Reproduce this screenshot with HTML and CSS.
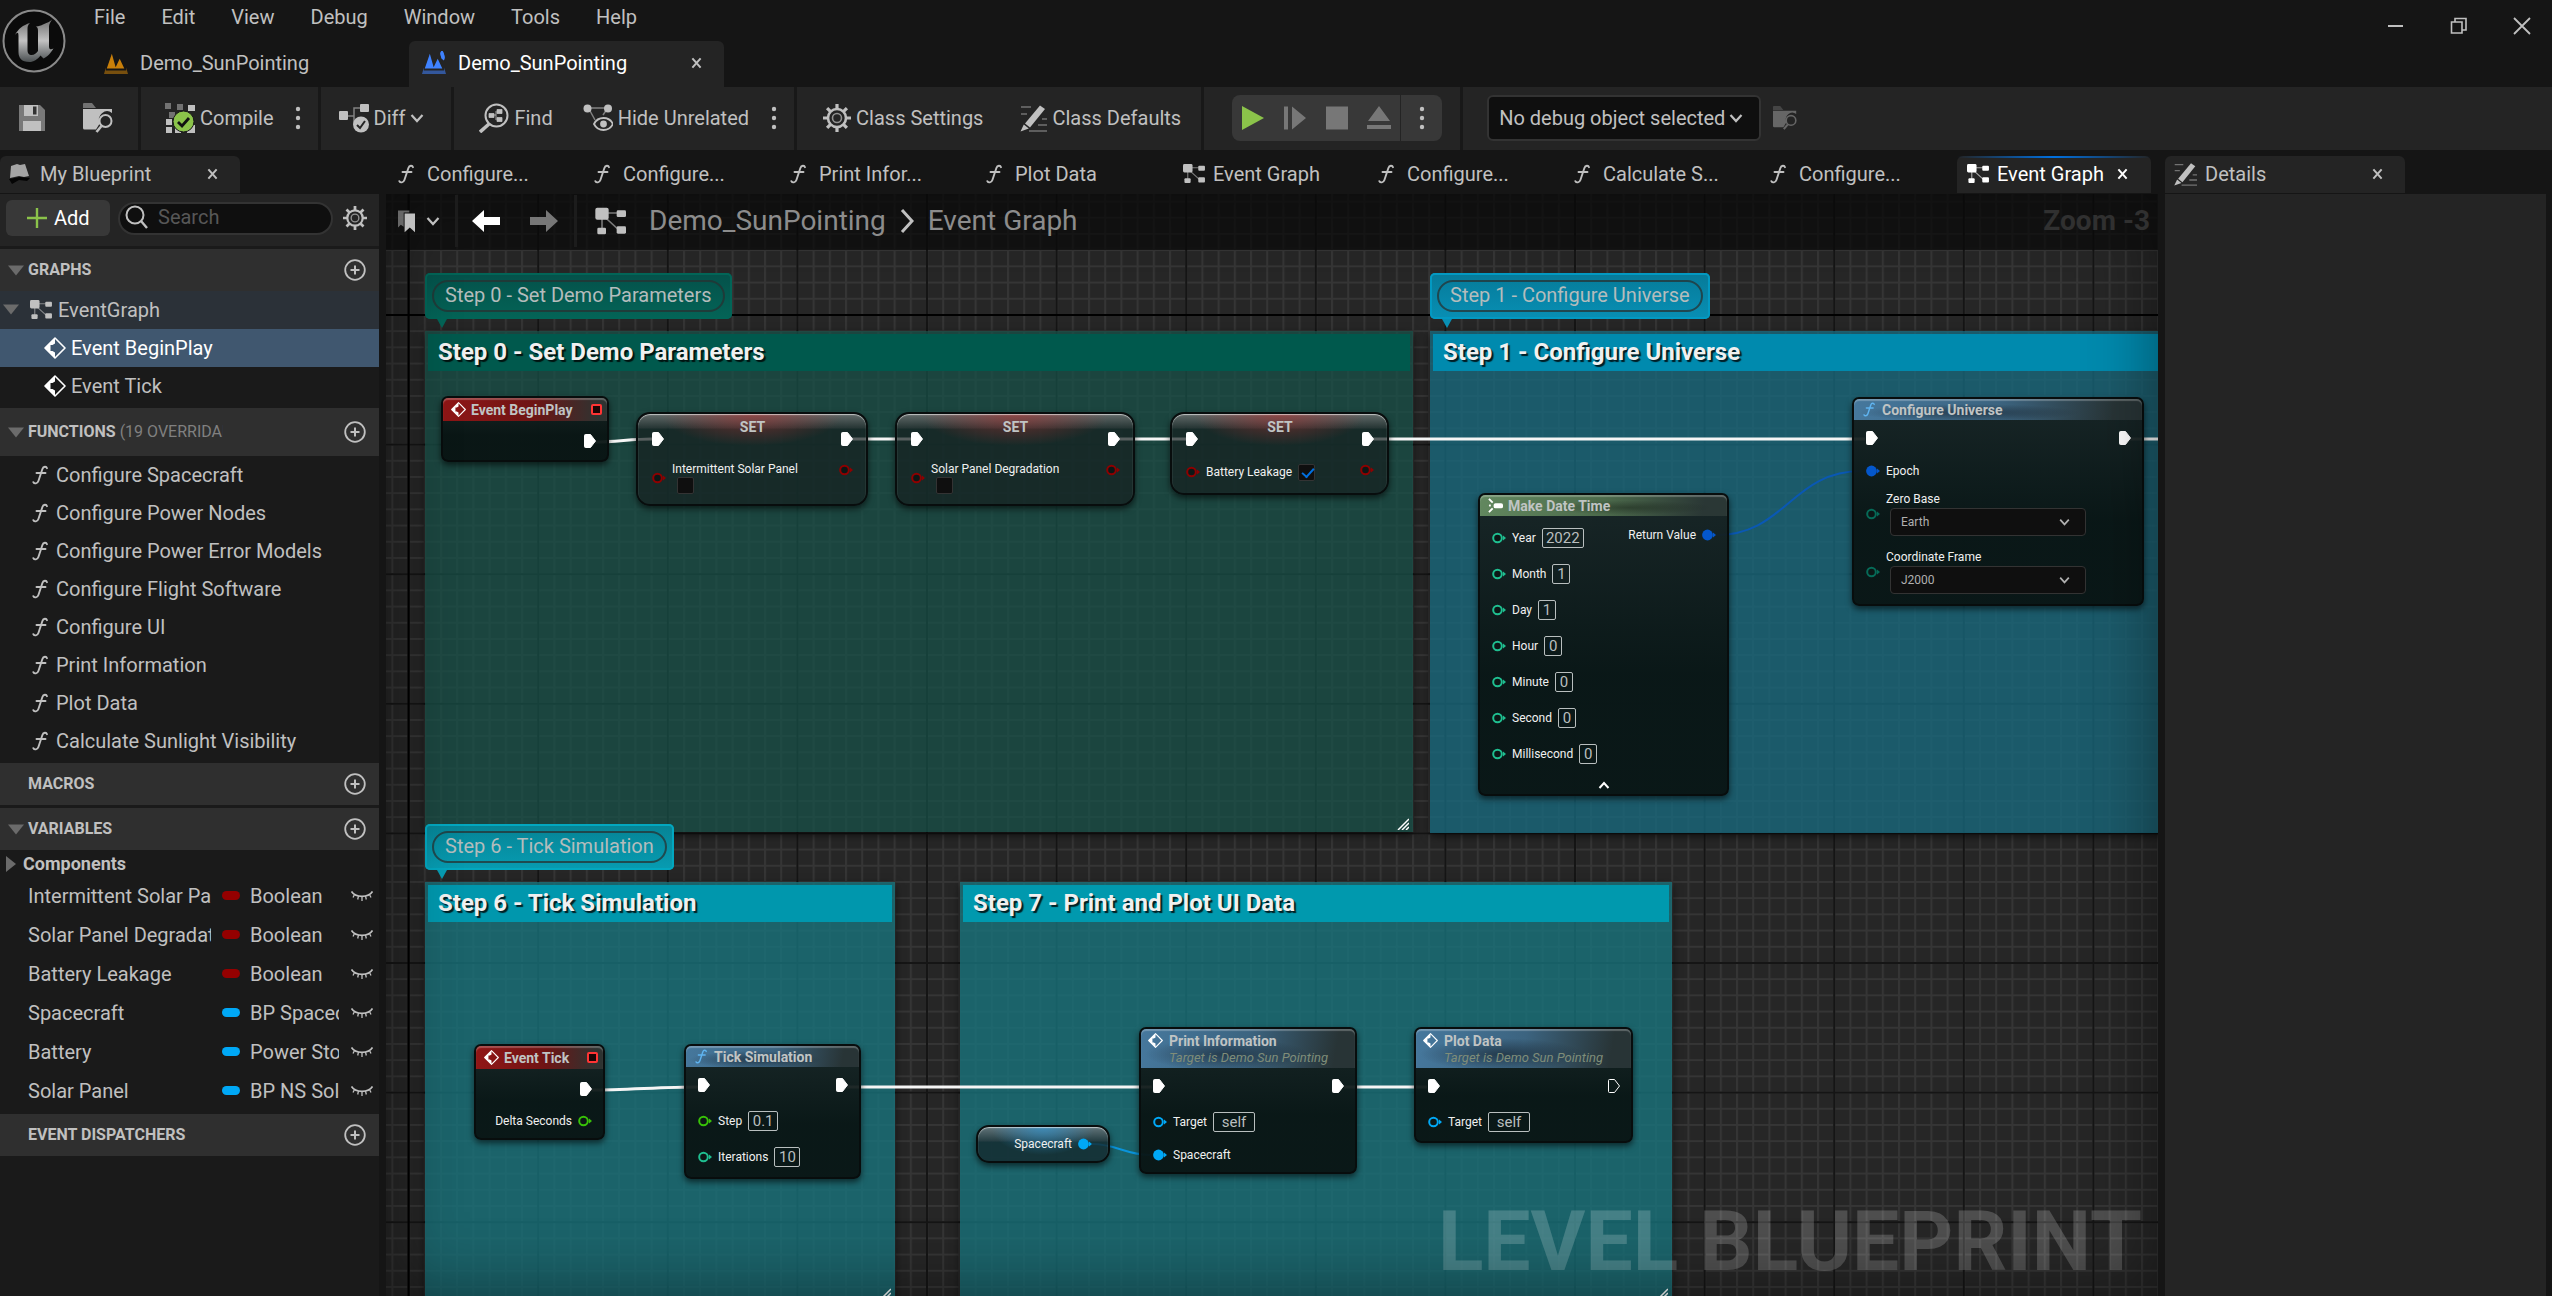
FILE: index.html
```html
<!DOCTYPE html>
<html lang="en">
<head>
    <meta charset="UTF-8">
    <meta name="viewport" content="width=device-width, initial-scale=1.0">
    <title>Demo_SunPointing</title>
    <link rel="stylesheet" href="styles.css">
</head>
<body>
    <!-- Shared icons -->
    <svg class="sprite" aria-hidden="true">
        <symbol id="i-func" viewBox="0 0 16 20"><path d="M15 3.2c-.6-2-3.6-2.2-4.6.8L6.4 16c-1 2.8-4 3-5 1.2M4.5 8h9" fill="none" stroke="currentColor" stroke-width="1.9" stroke-linecap="round"/></symbol>
        <symbol id="i-graph" viewBox="0 0 24 22"><path d="M8 5h12M6 8v12M8 8l11 10" stroke="currentColor" stroke-width="1.2" opacity=".6" fill="none"/><g fill="currentColor"><rect x="1" y="1" width="10" height="9" rx="1.5"/><rect x="17" y="3" width="7" height="5" rx="1"/><rect x="2.500" y="16" width="6.500" height="5" rx="1"/><rect x="17" y="15" width="7" height="5.500" rx="1"/></g></symbol>
        <symbol id="i-event" viewBox="0 0 22 22"><path d="M11 1 21 11 11 21 1 11z" fill="none" stroke="currentColor" stroke-width="1.6" stroke-linejoin="round"/><path d="M11 1v5.500L8.500 8H6.500v6h2L11 15.500V21L1 11z" fill="currentColor"/></symbol>
        <symbol id="i-exec" viewBox="0 0 12 14"><path d="M1.500.5h5L11.500 7l-5 6.500h-5a1 1 0 0 1-1-1v-11a1 1 0 0 1 1-1z"/></symbol>
        <symbol id="i-pin" viewBox="0 0 14 12"><circle cx="5.500" cy="6" r="4.300" fill="#0c1716" stroke="currentColor" stroke-width="2"/><path d="M11 3.500 14 6l-3 2.500z" fill="currentColor"/></symbol>
        <symbol id="i-pin-on" viewBox="0 0 14 12"><circle cx="5.500" cy="6" r="5.400" fill="currentColor"/><path d="M11 3.500 14 6l-3 2.500z" fill="currentColor"/></symbol>
        <symbol id="i-plus" viewBox="0 0 22 22"><circle cx="11" cy="11" r="9.800" fill="none" stroke="currentColor" stroke-width="1.800"/><path d="M11 6.500v9M6.500 11h9" stroke="currentColor" stroke-width="2"/></symbol>
        <symbol id="i-chev" viewBox="0 0 14 10"><path d="m1.500 2 5.500 6 5.500-6" fill="none" stroke="currentColor" stroke-width="2.200"/></symbol>
        <symbol id="i-dots" viewBox="0 0 6 24"><g fill="currentColor"><circle cx="3" cy="3" r="2.200"/><circle cx="3" cy="12" r="2.200"/><circle cx="3" cy="21" r="2.200"/></g></symbol>
        <symbol id="i-close" viewBox="0 0 12 12"><path d="m1.500 1 9 10m0-10-9 10" stroke="currentColor" stroke-width="2.200"/></symbol>
        <symbol id="i-gear" viewBox="0 0 28 28"><circle cx="14" cy="14" r="9" fill="none" stroke="currentColor" stroke-width="2.600"/><circle cx="14" cy="14" r="4.500" fill="none" stroke="currentColor" stroke-width="1.600" opacity=".7"/><path d="M14 0v5M14 23v5M0 14h5M23 14h5M4.100 4.100l3.500 3.500M20.400 20.400l3.500 3.500M4.100 23.900l3.500-3.500M20.400 7.600l3.500-3.500" stroke="currentColor" stroke-width="3.200"/></symbol>
        <symbol id="i-pencil" viewBox="0 0 28 28"><path d="M2 3h10M2 10h6M23 15h5M19 21h9M10 27h18" stroke="currentColor" stroke-width="1.600" opacity=".5"/><path d="M21 1.500 26 5 11 23.500 6 19.500z" fill="currentColor"/><path d="m4.800 20.500 5 4L1.500 27.500z" fill="currentColor"/></symbol>
        <symbol id="i-eye" viewBox="0 0 22 12"><path d="M.5 1.500c4 6.500 17 6.500 21 0" fill="none" stroke="currentColor" stroke-width="1.700"/><path d="M3.500 4.500 2 7.500M7.500 6l-.8 3.500M11 6.500V11M14.500 6l.8 3.500M18.500 4.500l1.500 3" stroke="currentColor" stroke-width="1.300"/></symbol>
        <symbol id="i-tri" viewBox="0 0 16 11"><path d="M0 .5h16L8 10.500z" fill="currentColor"/></symbol>
        <symbol id="i-browse" viewBox="0 0 30 30"><path d="M0 5V1q0-1 1-1h8l4 5z" fill="currentColor" opacity=".5"/><path d="M0 6h29v4a8 8 0 0 0-12 10l-4 6.500H1.500q-1.500 0-1.500-1.500z" fill="currentColor"/><circle cx="22.500" cy="18" r="6" fill="none" stroke="currentColor" stroke-width="2"/><path d="m18.500 23-5 6" stroke="currentColor" stroke-width="2.600"/></symbol>
        <symbol id="i-grip" viewBox="0 0 12 12"><path d="M1 12 12 1M5 12l7-7M9 12l3-3" stroke="currentColor" stroke-width="1.500"/></symbol>
        <symbol id="i-level" viewBox="0 0 26 26"><path d="M3 19 8.500 3l4.500 16zM12 19l5-10.500L22 19z" fill="currentColor"/><path d="M2 18 0 25h26l-2-7v3H2z" fill="currentColor" opacity=".55"/></symbol>
    </svg>

    <header class="titlebar">
        <svg class="logo" viewBox="0 0 66 66" role="img" aria-label="Unreal Engine">
            <defs><linearGradient id="metal" x1="0" y1="0" x2="0" y2="1"><stop offset="0" stop-color="#6f6f6f"/><stop offset=".5" stop-color="#c2c2c2"/><stop offset="1" stop-color="#4b5052"/></linearGradient></defs>
            <circle cx="33" cy="33" r="30.500" fill="#0b0b0b" stroke="#8a8a8a" stroke-width="2"/>
            <path d="M14 27c3-6 8-10 15-12-2 2-2.500 3-2.500 6v21c0 4 2 5 4 5 3 0 5-2 6.500-4V23c0-3-.5-3.500-2-4.500 3-.3 5-1 7-2 4-1.500 7-3 9-5-1.500 3-3 4-3 8v19c0 3 2 3.500 4.500 2-2.500 4-6 8.500-10 10l-3-3c-3 4-7 6.500-11 6.500-8 0-11-4-11-10V28c0-4-1-4.500-3.500-1z" fill="url(#metal)"/>
        </svg>
        <div class="title-main">
            <nav class="menu">
                <a href="#">File</a><a href="#">Edit</a><a href="#">View</a><a href="#">Debug</a><a href="#">Window</a><a href="#">Tools</a><a href="#">Help</a>
            </nav>
            <div class="doc-tabs">
                <a class="doc-tab" href="#"><svg class="level-icon orange"><use href="#i-level"/></svg>Demo_SunPointing</a>
                <a class="doc-tab active" href="#"><svg class="level-icon blue" viewBox="0 0 26 26"><use href="#i-level"/><path d="M23 1c-4 2 2 5-1 8" fill="none" stroke="currentColor" stroke-width="4"/></svg>Demo_SunPointing<svg class="close"><use href="#i-close"/></svg></a>
            </div>
        </div>
        <div class="window-controls">
            <button aria-label="Minimize"><svg viewBox="0 0 18 18"><path d="M1 9h15" stroke="currentColor" stroke-width="2"/></svg></button>
            <button aria-label="Restore"><svg viewBox="0 0 18 18"><path d="M1.500 5h10.500v11H1.500zM5 5V1.500h11V13h-4" fill="none" stroke="currentColor" stroke-width="1.600"/></svg></button>
            <button aria-label="Close"><svg viewBox="0 0 18 18"><path d="m1 1 16 16M17 1 1 17" stroke="currentColor" stroke-width="1.800"/></svg></button>
        </div>
    </header>

    <div class="toolbar">
        <div class="tool-group g-file">
            <button aria-label="Save"><svg class="icon-28" viewBox="0 0 28 28"><path d="M1 1h21l5 5v21H1z" fill="currentColor" opacity=".55"/><path d="M6 1h14v11H6zM5 17h18v10H5z" fill="currentColor"/><path d="M15 2.500h3.500v8H15z" fill="#333"/></svg></button>
            <button aria-label="Browse"><svg class="icon-30"><use href="#i-browse"/></svg></button>
        </div>
        <div class="tool-group g-compile">
            <button><svg class="icon-30" viewBox="0 0 30 30"><g fill="currentColor"><path opacity=".5" d="M0 0h6v6H0zM12 1h6v6h-6zM4 9h6v6H4z"/><path d="M23 2h7v6h-7zM1 16h6v6H1zM1 24h6v6H1zM22 22h8v8h-8zM10 24h6v6h-6z"/></g><circle cx="18.500" cy="18.500" r="10.500" fill="#8bc34a" stroke="#1a1a1a"/><path d="m13 19 4 4 7-8" fill="none" stroke="#111" stroke-width="2.800"/></svg>Compile</button>
            <button aria-label="Compile options"><svg class="dots"><use href="#i-dots"/></svg></button>
        </div>
        <div class="tool-group g-diff">
            <button><svg class="icon-30" viewBox="0 0 30 30"><path d="M9 13h6V5h6M15 13v8" fill="none" stroke="currentColor" stroke-width="1.500" opacity=".6"/><rect y="8" width="9" height="9" rx="1" fill="currentColor"/><rect x="21" y="1" width="9" height="8" rx="1" fill="currentColor"/><circle cx="22" cy="21.500" r="8" fill="currentColor"/><path d="m18 22 3 3 5-7" fill="none" stroke="#242424" stroke-width="2"/></svg>Diff<svg class="chev"><use href="#i-chev"/></svg></button>
        </div>
        <div class="tool-group g-find">
            <button><svg class="icon-30" viewBox="0 0 30 30"><circle cx="17.500" cy="12.500" r="11" fill="none" stroke="currentColor" stroke-width="2"/><path d="m10 21-9 8" stroke="currentColor" stroke-width="3.600"/><path d="M10 10.500h5v4h-5zM18 6.500h5v4h-5zM18 14.500h5v4h-5zM15 12h2M17 8v9" fill="currentColor" stroke="currentColor" stroke-width=".8"/></svg>Find</button>
            <button><svg class="icon-30" viewBox="0 0 30 30"><path d="M5 5h20M6 6l6 11M24 6l-4 6" stroke="currentColor" stroke-width="1.500" opacity=".6"/><circle cx="4.500" cy="5.500" r="4" fill="currentColor"/><circle cx="25" cy="5.500" r="4" fill="currentColor"/><path d="M11 21c4-8 15-8 19 0-4 8-15 8-19 0z" fill="none" stroke="currentColor" stroke-width="1.800"/><circle cx="20.500" cy="21" r="3.400" fill="currentColor"/></svg>Hide Unrelated</button>
            <button aria-label="Hide options"><svg class="dots"><use href="#i-dots"/></svg></button>
        </div>
        <div class="tool-group g-class">
            <button><svg class="icon-28"><use href="#i-gear"/></svg>Class Settings</button>
            <button><svg class="icon-28"><use href="#i-pencil"/></svg>Class Defaults</button>
        </div>
        <div class="tool-group g-play">
            <div class="play-box">
                <button class="play" aria-label="Play"><svg viewBox="0 0 24 26"><path d="M1 1v24l22-12z" fill="currentColor"/></svg></button>
                <button aria-label="Step"><svg viewBox="0 0 24 26"><path d="M1 1.500h4v23H1zM9 1.500v23L23 13z" fill="currentColor"/></svg></button>
                <button aria-label="Stop"><svg viewBox="0 0 24 26"><path d="M1 1.500h22v23H1z" fill="currentColor"/></svg></button>
                <button aria-label="Eject"><svg viewBox="0 0 24 26"><path d="M12 1 23 16H1zM0 20h24v4H0z" fill="currentColor"/></svg></button>
                <button class="more" aria-label="Play options"><svg class="dots"><use href="#i-dots"/></svg></button>
            </div>
        </div>
        <div class="tool-group g-debug">
            <div class="select-wrap debug-select">
                <select aria-label="Debug object"><option>No debug object selected</option></select>
                <svg class="chev"><use href="#i-chev"/></svg>
            </div>
            <button class="dim" aria-label="Browse debug object"><svg class="icon-24"><use href="#i-browse"/></svg></button>
        </div>
    </div>

    <main class="workspace">
        <aside class="panel my-blueprint">
            <div class="panel-tabs">
                <div class="panel-tab"><svg class="icon-24" viewBox="0 0 24 24"><path d="M3 4 9 2l3 1 5-1 4 12-5 1-5-1-9 2z" fill="#a5a5a5"/><path d="m1 17 11-2 10 1-3 3-8-1-7 4z" fill="#050505"/></svg><span>My Blueprint</span><svg class="close"><use href="#i-close"/></svg></div>
            </div>
            <div class="add-row">
                <button class="add-button"><svg class="add-plus" viewBox="0 0 20 20"><path d="M10 0v20M0 10h20" stroke="currentColor" stroke-width="2.400"/></svg>Add</button>
                <label class="search"><svg class="icon-24" viewBox="0 0 24 24"><circle cx="11" cy="10" r="8.500" fill="none" stroke="currentColor" stroke-width="2"/><path d="m17 16 6 7" stroke="currentColor" stroke-width="2.400"/></svg><input type="text" placeholder="Search" aria-label="Search"></label>
                <button aria-label="View settings"><svg class="gear"><use href="#i-gear"/></svg></button>
            </div>
            <section>
                <h2><svg class="tri"><use href="#i-tri"/></svg>GRAPHS<button aria-label="Add graph"><svg><use href="#i-plus"/></svg></button></h2>
                <ul class="tree">
                    <li class="parent"><svg class="tri"><use href="#i-tri"/></svg><svg class="graph-icon"><use href="#i-graph"/></svg>EventGraph</li>
                    <li class="child selected"><svg class="event-icon"><use href="#i-event"/></svg>Event BeginPlay</li>
                    <li class="child"><svg class="event-icon"><use href="#i-event"/></svg>Event Tick</li>
                </ul>
            </section>
            <section>
                <h2 class="tall"><svg class="tri"><use href="#i-tri"/></svg>FUNCTIONS<span class="override">(19 OVERRIDABLE)</span><button aria-label="Add function"><svg><use href="#i-plus"/></svg></button></h2>
                <ul class="tree functions">
                    <li><svg class="func-icon"><use href="#i-func"/></svg>Configure Spacecraft</li>
                    <li><svg class="func-icon"><use href="#i-func"/></svg>Configure Power Nodes</li>
                    <li><svg class="func-icon"><use href="#i-func"/></svg>Configure Power Error Models</li>
                    <li><svg class="func-icon"><use href="#i-func"/></svg>Configure Flight Software</li>
                    <li><svg class="func-icon"><use href="#i-func"/></svg>Configure UI</li>
                    <li><svg class="func-icon"><use href="#i-func"/></svg>Print Information</li>
                    <li><svg class="func-icon"><use href="#i-func"/></svg>Plot Data</li>
                    <li><svg class="func-icon"><use href="#i-func"/></svg>Calculate Sunlight Visibility</li>
                </ul>
            </section>
            <section>
                <h2><i class="tri"></i>MACROS<button aria-label="Add macro"><svg><use href="#i-plus"/></svg></button></h2>
            </section>
            <section>
                <h2><svg class="tri"><use href="#i-tri"/></svg>VARIABLES<button aria-label="Add variable"><svg><use href="#i-plus"/></svg></button></h2>
                <h3><svg viewBox="0 0 10 16"><path d="M0 0v16l10-8z" fill="#6b6b6b"/></svg>Components</h3>
                <ul class="variables">
                    <li><span class="name">Intermittent Solar Panel</span><i class="pill bool"></i><span class="type">Boolean</span><svg><use href="#i-eye"/></svg></li>
                    <li><span class="name">Solar Panel Degradation</span><i class="pill bool"></i><span class="type">Boolean</span><svg><use href="#i-eye"/></svg></li>
                    <li><span class="name">Battery Leakage</span><i class="pill bool"></i><span class="type">Boolean</span><svg><use href="#i-eye"/></svg></li>
                    <li><span class="name">Spacecraft</span><i class="pill object"></i><span class="type">BP Spacecraft</span><svg><use href="#i-eye"/></svg></li>
                    <li><span class="name">Battery</span><i class="pill object"></i><span class="type">Power Storage</span><svg><use href="#i-eye"/></svg></li>
                    <li><span class="name">Solar Panel</span><i class="pill object"></i><span class="type">BP NS Solar</span><svg><use href="#i-eye"/></svg></li>
                </ul>
            </section>
            <section>
                <h2><i class="tri"></i>EVENT DISPATCHERS<button aria-label="Add dispatcher"><svg><use href="#i-plus"/></svg></button></h2>
            </section>
        </aside>

        <section class="panel graph-panel">
            <div class="graph-tabs">
                <a class="graph-tab" href="#"><svg class="func-icon"><use href="#i-func"/></svg>Configure...</a>
                <a class="graph-tab" href="#"><svg class="func-icon"><use href="#i-func"/></svg>Configure...</a>
                <a class="graph-tab" href="#"><svg class="func-icon"><use href="#i-func"/></svg>Print Infor...</a>
                <a class="graph-tab" href="#"><svg class="func-icon"><use href="#i-func"/></svg>Plot Data</a>
                <a class="graph-tab" href="#"><svg class="graph-icon"><use href="#i-graph"/></svg>Event Graph</a>
                <a class="graph-tab" href="#"><svg class="func-icon"><use href="#i-func"/></svg>Configure...</a>
                <a class="graph-tab" href="#"><svg class="func-icon"><use href="#i-func"/></svg>Calculate S...</a>
                <a class="graph-tab" href="#"><svg class="func-icon"><use href="#i-func"/></svg>Configure...</a>
                <a class="graph-tab active" href="#"><svg class="graph-icon"><use href="#i-graph"/></svg>Event Graph<svg class="close"><use href="#i-close"/></svg></a>
            </div>

            <div class="canvas">
                <svg class="grid">
                    <defs>
                        <pattern id="grid-minor" x="21.600" y="120" width="16.200" height="16.200" patternUnits="userSpaceOnUse"><path d="M1 0v17M0 1h17" stroke="#353535" stroke-width="2"/></pattern>
                        <pattern id="grid-major" x="21.600" y="120" width="129.600" height="129.600" patternUnits="userSpaceOnUse"><path d="M1 0v130M0 1h130" stroke="#151515" stroke-width="2"/></pattern>
                    </defs>
                    <rect width="100%" height="100%" fill="url(#grid-minor)"/>
                    <rect width="100%" height="100%" fill="url(#grid-major)"/>
                    <path d="M22.600 0v2000M0 121h4000" stroke="#000" stroke-width="2"/>
                </svg>

                <div class="comment" id="comment-0"><h4>Step 0 - Set Demo Parameters</h4><svg class="grip"><use href="#i-grip"/></svg></div>
                <div class="comment" id="comment-1"><h4>Step 1 - Configure Universe</h4></div>
                <div class="comment" id="comment-6"><h4>Step 6 - Tick Simulation</h4><svg class="grip"><use href="#i-grip"/></svg></div>
                <div class="comment" id="comment-7"><h4>Step 7 - Print and Plot UI Data</h4><svg class="grip"><use href="#i-grip"/></svg></div>
                <div class="bubble" id="bubble-0"><span>Step 0 - Set Demo Parameters</span></div>
                <div class="bubble" id="bubble-1"><span>Step 1 - Configure Universe</span></div>
                <div class="bubble" id="bubble-6"><span>Step 6 - Tick Simulation</span></div>

                <svg class="wires" fill="none">
                    <g stroke="#f5f5f5" stroke-width="3">
                        <path d="M209 248C230 248 245 245 266 245M465 245h60M733 245h68M987 245h492M1744 245h900"/>
                        <path d="M204 896C240 896 276 893 312 893M461 893h305M958 893h83"/>
                    </g>
                    <path d="M1330 341C1400 341 1405 277 1476 277" stroke="#0a58b4" stroke-width="2"/>
                    <path d="M706 950C730 950 740 961 764 961" stroke="#0a94dc" stroke-width="2"/>
                </svg>

                <article class="node event" id="begin-play">
                    <header><svg class="event-icon"><use href="#i-event"/></svg>Event BeginPlay<i class="delegate"></i></header>
                    <div class="row exec"><i></i><svg class="pin-exec"><use href="#i-exec"/></svg></div>
                </article>

                <article class="node setter" id="set-intermittent">
                    <div class="set-head"><svg class="pin-exec"><use href="#i-exec"/></svg><b>SET</b><svg class="pin-exec"><use href="#i-exec"/></svg></div>
                    <div class="set-row"><svg class="pin bool"><use href="#i-pin"/></svg><label class="stacked">Intermittent Solar Panel<input type="checkbox"></label><svg class="pin bool out"><use href="#i-pin"/></svg></div>
                </article>
                <article class="node setter" id="set-degradation">
                    <div class="set-head"><svg class="pin-exec"><use href="#i-exec"/></svg><b>SET</b><svg class="pin-exec"><use href="#i-exec"/></svg></div>
                    <div class="set-row"><svg class="pin bool"><use href="#i-pin"/></svg><label class="stacked">Solar Panel Degradation<input type="checkbox"></label><svg class="pin bool out"><use href="#i-pin"/></svg></div>
                </article>
                <article class="node setter" id="set-leakage">
                    <div class="set-head"><svg class="pin-exec"><use href="#i-exec"/></svg><b>SET</b><svg class="pin-exec"><use href="#i-exec"/></svg></div>
                    <div class="set-row"><svg class="pin bool"><use href="#i-pin"/></svg><label>Battery Leakage<input type="checkbox" checked></label><svg class="pin bool out"><use href="#i-pin"/></svg></div>
                </article>

                <article class="node pure" id="make-date">
                    <header><svg class="make-icon" viewBox="0 0 16 16"><path d="m1 1 4 4M1 15l4-4" stroke="currentColor" stroke-width="2"/><rect x="6" y="5.500" width="10" height="5.500" rx="2" fill="currentColor"/><path d="M1 8h2" stroke="currentColor" stroke-width="2"/></svg>Make Date Time</header>
                    <div class="columns">
                        <div>
                            <label class="row"><svg class="pin int"><use href="#i-pin"/></svg>Year<input type="text" class="w-4" value="2022"></label>
                            <label class="row"><svg class="pin int"><use href="#i-pin"/></svg>Month<input type="text" class="w-1" value="1"></label>
                            <label class="row"><svg class="pin int"><use href="#i-pin"/></svg>Day<input type="text" class="w-1" value="1"></label>
                            <label class="row"><svg class="pin int"><use href="#i-pin"/></svg>Hour<input type="text" class="w-1" value="0"></label>
                            <label class="row"><svg class="pin int"><use href="#i-pin"/></svg>Minute<input type="text" class="w-1" value="0"></label>
                            <label class="row"><svg class="pin int"><use href="#i-pin"/></svg>Second<input type="text" class="w-1" value="0"></label>
                            <label class="row"><svg class="pin int"><use href="#i-pin"/></svg>Millisecond<input type="text" class="w-1" value="0"></label>
                        </div>
                        <div class="row short">Return Value<svg class="pin struct"><use href="#i-pin-on"/></svg></div>
                    </div>
                    <button class="collapse" aria-label="Collapse"><svg viewBox="0 0 12 8"><path d="m1.500 7 4.500-5 4.500 5" fill="none" stroke="currentColor" stroke-width="2"/></svg></button>
                </article>

                <article class="node func" id="configure-universe">
                    <header><svg class="func-icon"><use href="#i-func"/></svg>Configure Universe</header>
                    <div class="row exec"><svg class="pin-exec"><use href="#i-exec"/></svg><svg class="pin-exec"><use href="#i-exec"/></svg></div>
                    <div class="row short"><svg class="pin struct"><use href="#i-pin-on"/></svg>Epoch</div>
                    <div class="row picker"><svg class="pin enum"><use href="#i-pin"/></svg><div><label for="zero-base">Zero Base</label><div class="select-wrap"><select id="zero-base"><option>Earth</option></select><svg class="chev"><use href="#i-chev"/></svg></div></div></div>
                    <div class="row picker"><svg class="pin enum"><use href="#i-pin"/></svg><div><label for="frame">Coordinate Frame</label><div class="select-wrap"><select id="frame"><option>J2000</option></select><svg class="chev"><use href="#i-chev"/></svg></div></div></div>
                </article>

                <article class="node event" id="event-tick">
                    <header><svg class="event-icon"><use href="#i-event"/></svg>Event Tick<i class="delegate"></i></header>
                    <div class="row exec"><i></i><svg class="pin-exec"><use href="#i-exec"/></svg></div>
                    <div class="row short right">Delta Seconds<svg class="pin float"><use href="#i-pin"/></svg></div>
                </article>

                <article class="node func" id="tick-simulation">
                    <header><svg class="func-icon"><use href="#i-func"/></svg>Tick Simulation</header>
                    <div class="row exec"><svg class="pin-exec"><use href="#i-exec"/></svg><svg class="pin-exec"><use href="#i-exec"/></svg></div>
                    <label class="row"><svg class="pin float"><use href="#i-pin"/></svg>Step<input type="text" class="w-3" value="0.1"></label>
                    <label class="row"><svg class="pin int"><use href="#i-pin"/></svg>Iterations<input type="text" class="w-2" value="10"></label>
                </article>

                <article class="node getter" id="get-spacecraft">Spacecraft<svg class="pin object"><use href="#i-pin-on"/></svg></article>

                <article class="node func call" id="print-information">
                    <header><svg class="event-icon"><use href="#i-event"/></svg><div>Print Information<em>Target is Demo Sun Pointing</em></div></header>
                    <div class="row exec"><svg class="pin-exec"><use href="#i-exec"/></svg><svg class="pin-exec"><use href="#i-exec"/></svg></div>
                    <label class="row"><svg class="pin object"><use href="#i-pin"/></svg>Target<input type="text" class="w-4" value="self"></label>
                    <div class="row short"><svg class="pin object"><use href="#i-pin-on"/></svg>Spacecraft</div>
                </article>

                <article class="node func call" id="plot-data">
                    <header><svg class="event-icon"><use href="#i-event"/></svg><div>Plot Data<em>Target is Demo Sun Pointing</em></div></header>
                    <div class="row exec"><svg class="pin-exec"><use href="#i-exec"/></svg><svg class="pin-exec hollow"><use href="#i-exec"/></svg></div>
                    <label class="row"><svg class="pin object"><use href="#i-pin"/></svg>Target<input type="text" class="w-4" value="self"></label>
                </article>

                <div class="watermark">LEVEL BLUEPRINT</div>
                <div class="vignette"></div>

                <div class="graph-bar">
                    <button class="bookmark" aria-label="Bookmarks"><svg class="mark" viewBox="0 0 18 24"><path d="M0 1h12v2H6v15l-3-2-3 3z" fill="currentColor" opacity=".5"/><path d="M7 4h11v20l-5.500-5L7 24z" fill="currentColor"/></svg><svg class="chev"><use href="#i-chev"/></svg></button>
                    <button class="nav back" aria-label="Back"><svg viewBox="0 0 28 22"><path d="M0 11 12 0v7h16v8H12v7z" fill="currentColor"/></svg></button>
                    <button class="nav forward" aria-label="Forward"><svg viewBox="0 0 28 22"><path d="M28 11 16 0v7H0v8h16v7z" fill="currentColor"/></svg></button>
                    <svg class="crumb-icon"><use href="#i-graph"/></svg>
                    <a href="#">Demo_SunPointing</a>
                    <svg class="crumb-sep" viewBox="0 0 14 24"><path d="m2 1 10 11L2 23" fill="none" stroke="currentColor" stroke-width="3"/></svg>
                    <a href="#">Event Graph</a>
                    <strong>Zoom -3</strong>
                </div>
            </div>
        </section>

        <aside class="panel details">
            <div class="panel-tabs">
                <div class="panel-tab"><svg class="icon-24"><use href="#i-pencil"/></svg><span>Details</span><svg class="close"><use href="#i-close"/></svg></div>
            </div>
            <div class="details-body"></div>
        </aside>
    </main>
</body>
</html>
```

FILE: styles.css
```css
* {
    margin: 0;
    padding: 0;
    box-sizing: border-box;
}

body {
    font-family: Roboto, "Liberation Sans", sans-serif;
    font-size: 20px;
    line-height: 24px;
    color: #c0c0c0;
    background: #151515;
    height: 100vh;
    display: flex;
    flex-direction: column;
    overflow: hidden;
}

a {
    color: inherit;
    text-decoration: none;
}

ul {
    list-style: none;
}

svg {
    display: block;
    flex: none;
}

button,
input,
select {
    font: inherit;
    color: inherit;
    background: none;
    border: none;
    outline: none;
}

button {
    display: flex;
    align-items: center;
    white-space: nowrap;
}

select {
    appearance: none;
}

.sprite {
    position: absolute;
    width: 0;
    height: 0;
}

.icon-24 { width: 24px; height: 24px; }
.icon-28 { width: 28px; height: 28px; }
.icon-30 { width: 30px; height: 30px; }
.dots { width: 6px; height: 24px; }
.chev { width: 14px; height: 10px; }
.close { width: 11px; height: 12px; }
.func-icon { width: 16px; height: 20px; }
.event-icon { width: 22px; height: 22px; }
.graph-icon { width: 23px; height: 21px; }

/* Title bar */
.titlebar {
    display: flex;
    height: 87px;
    flex: none;
}

.logo {
    width: 66px;
    height: 66px;
    margin: 8px 10px 0 1px;
}

.title-main {
    flex: 1;
}

.menu {
    display: flex;
    gap: 36px;
    height: 41px;
    padding: 5px 0 0 17px;
}

.doc-tabs {
    display: flex;
    gap: 3px;
    padding-left: 14px;
}

.doc-tab {
    display: flex;
    align-items: center;
    gap: 11px;
    width: 315px;
    height: 46px;
    padding: 0 22px 2px 12px;
    border-radius: 6px 6px 0 0;
}

.doc-tab.active {
    background: #242424;
    color: #fff;
}

.doc-tab .close {
    margin-left: auto;
    color: #c0c0c0;
}

.level-icon {
    width: 26px;
    height: 24px;
}

.level-icon.orange { color: #c87f0a; }
.level-icon.blue { color: #3f82ff; }

.window-controls {
    display: flex;
    gap: 45px;
    align-items: flex-start;
    padding: 17px 21px 0 0;
}

.window-controls svg {
    width: 18px;
    height: 18px;
}

/* Toolbar */
.toolbar {
    display: flex;
    height: 63px;
    flex: none;
    background: #242424;
}

.tool-group {
    display: flex;
    align-items: center;
    padding-bottom: 2px;
    border-right: 3px solid #181818;
}

.tool-group button {
    gap: 5px;
}

.g-file {
    gap: 37px;
    padding-left: 18px;
    padding-right: 25px;
}

.g-compile {
    gap: 21px;
    padding-left: 24px;
    padding-right: 17px;
}

.g-diff {
    padding-left: 18px;
    padding-right: 27px;
}

.g-find {
    gap: 30px;
    padding-left: 25px;
    padding-right: 17px;
}

.g-find button:last-child {
    margin-left: -8px;
}

.g-class {
    gap: 36px;
    padding-left: 26px;
    padding-right: 20px;
}

.g-play {
    padding-left: 28px;
    padding-right: 18px;
}

.g-debug {
    gap: 12px;
    padding-left: 24px;
    border: none;
}

.play-box {
    display: flex;
    height: 46px;
    border-radius: 8px;
    background: #383838;
    color: #777;
    overflow: hidden;
}

.play-box button {
    width: 42px;
    justify-content: center;
}

.play-box svg {
    width: 24px;
    height: 26px;
}

.play-box .play {
    color: #8bc34a;
}

.play-box .more {
    border-left: 1px solid #242424;
    color: #c0c0c0;
}

.play-box .more .dots {
    width: 6px;
    height: 24px;
}

.dim {
    color: #666;
}

.select-wrap {
    position: relative;
}

.select-wrap select {
    width: 100%;
    height: 100%;
    background: #0f0f0f;
    border: 2px solid #333;
    border-radius: 6px;
    padding-left: 10px;
}

.select-wrap .chev {
    position: absolute;
    right: 18px;
    top: 50%;
    margin-top: -5px;
    pointer-events: none;
}

.debug-select {
    width: 274px;
    height: 46px;
}

/* Panels */
.workspace {
    display: flex;
    flex: 1;
    gap: 7px;
    padding: 6px 6px 0 0;
    min-height: 0;
}

.panel {
    display: flex;
    flex-direction: column;
    flex: none;
}

.panel-tabs {
    height: 38px;
    flex: none;
}

.panel-tab {
    display: flex;
    align-items: center;
    gap: 8px;
    width: 240px;
    height: 37px;
    padding: 0 22px 2px 8px;
    border-radius: 6px 6px 0 0;
    background: #242424;
}

.panel-tab .close {
    margin-left: auto;
}

.my-blueprint {
    width: 379px;
    background: #1a1a1a;
}

.my-blueprint .panel-tabs {
    background: #151515;
}

.add-row {
    display: flex;
    align-items: center;
    gap: 8px;
    height: 52px;
    padding: 0 12px 4px 6px;
    margin-bottom: 3px;
    background: #242424;
    flex: none;
}

.add-button {
    gap: 7px;
    width: 104px;
    height: 36px;
    padding-left: 21px;
    border-radius: 6px;
    background: #383838;
    color: #fff;
}

.add-plus {
    width: 20px;
    height: 20px;
    color: #8bc34a;
}

.search {
    display: flex;
    align-items: center;
    gap: 10px;
    flex: 1;
    min-width: 0;
    height: 33px;
    padding: 0 0 2px 4px;
    border: 2px solid #333;
    border-radius: 17px;
    background: #0f0f0f;
}

.search input {
    width: 100%;
}

.search input::placeholder {
    color: #575757;
}

.gear {
    width: 24px;
    height: 24px;
    margin-left: 2px;
}

.my-blueprint section {
    margin-bottom: 3px;
}

.my-blueprint h2 {
    display: flex;
    align-items: center;
    gap: 4px;
    height: 42px;
    padding: 0 13px 0 8px;
    font-size: 16px;
    font-weight: 700;
    background: #2f2f2f;
}

.my-blueprint h2.tall {
    height: 48px;
}

.my-blueprint h2 button {
    margin-left: auto;
}

.my-blueprint h2 button svg {
    width: 22px;
    height: 22px;
}

.tri {
    width: 16px;
    height: 11px;
    color: #6b6b6b;
}

.override {
    width: 103px;
    overflow: hidden;
    white-space: nowrap;
    font-weight: 400;
    color: #808080;
}

.tree li {
    display: flex;
    align-items: center;
    gap: 6px;
    height: 38px;
    padding-bottom: 1px;
}

.tree .parent {
    padding-left: 3px;
    background: #2b3138;
}

.tree .parent .graph-icon {
    margin-left: 4px;
}

.tree .child {
    gap: 5px;
    padding-left: 44px;
}

.tree .event-icon {
    color: #fff;
}

.tree .selected {
    background: #40576f;
    color: #fff;
}

.tree.functions li {
    gap: 8px;
    padding-left: 32px;
}

.my-blueprint h3 {
    display: flex;
    align-items: center;
    gap: 7px;
    height: 27px;
    padding-left: 6px;
    font-size: 18px;
    font-weight: 700;
}

.my-blueprint h3 svg {
    width: 10px;
    height: 16px;
}

.variables li {
    display: flex;
    align-items: center;
    height: 39px;
    padding: 0 0 2px 28px;
    white-space: nowrap;
}

.variables svg {
    width: 22px;
    height: 12px;
    color: #c0c0c0;
}

.variables .name {
    width: 183px;
    overflow: hidden;
}

.variables .type {
    width: 89px;
    margin-right: 12px;
    overflow: hidden;
}

.pill {
    width: 18px;
    height: 9px;
    margin: 0 10px 0 11px;
    border-radius: 5px;
}

.pill.bool { background: #950000; }
.pill.object { background: #00a8f6; }

/* Graph */
.graph-panel {
    flex: 1;
    min-width: 0;
}

.graph-tabs {
    display: flex;
    height: 38px;
    padding-left: 3px;
    flex: none;
}

.graph-tab {
    display: flex;
    align-items: center;
    gap: 13px;
    width: 196px;
    height: 37px;
    padding: 0 0 2px 9px;
    white-space: nowrap;
}

.graph-tab .graph-icon {
    margin-right: -5px;
}

.graph-tab.active {
    position: relative;
    width: 194px;
    border-radius: 6px 6px 0 0;
    background: #242424;
    color: #fff;
}

.graph-tab.active::before {
    content: "";
    position: absolute;
    left: 0;
    top: 0;
    width: 100%;
    height: 2px;
    background: linear-gradient(90deg, transparent, #0070e0, transparent);
}

.canvas {
    position: relative;
    flex: 1;
    overflow: hidden;
    background: #262626;
}

.grid,
.wires,
.vignette {
    position: absolute;
    left: 0;
    top: 0;
    width: 100%;
    height: 100%;
}

.vignette {
    box-shadow: inset 0 0 70px rgba(0, 0, 0, 0.45);
    pointer-events: none;
}

.graph-bar {
    position: absolute;
    left: 0;
    top: 0;
    width: 100%;
    height: 56px;
    display: flex;
    align-items: center;
    padding: 0 8px 2px 12px;
    background: rgba(8, 8, 8, 0.7);
    font-size: 28px;
    color: #8c8c8c;
}

.bookmark {
    gap: 11px;
    height: 52px;
    padding-right: 15px;
    border-right: 3px solid #1c1c1c;
    color: #c0c0c0;
}

.mark {
    width: 17px;
    height: 24px;
}

.nav svg {
    width: 28px;
    height: 22px;
}

.nav.back {
    margin: 0 30px 0 14px;
    color: #fff;
}

.nav.forward {
    height: 52px;
    padding-right: 16px;
    border-right: 3px solid #1c1c1c;
    color: #777;
}

.crumb-icon {
    width: 32px;
    height: 30px;
    margin: 0 23px 0 17px;
    color: #c0c0c0;
}

.crumb-sep {
    width: 14px;
    height: 24px;
    margin: 0 14px;
    color: #c0c0c0;
}

.graph-bar strong {
    margin-left: auto;
    color: #303030;
}

.watermark {
    position: absolute;
    right: 16px;
    bottom: 12px;
    font-size: 84px;
    line-height: 84px;
    font-weight: 700;
    color: rgba(255, 255, 255, 0.19);
}

/* Comment boxes */
.comment {
    position: absolute;
    padding: 3px;
    box-shadow: 0 3px 8px rgba(0, 0, 0, 0.6);
}

.comment h4 {
    height: 37px;
    padding-left: 10px;
    font-size: 24px;
    line-height: 37px;
    font-weight: 700;
    color: #f0f0f0;
    text-shadow: 2px 2px 1px rgba(0, 0, 0, 0.8);
}

.grip {
    position: absolute;
    right: 4px;
    bottom: 2px;
    width: 12px;
    height: 12px;
    color: #fff;
}

#comment-0 {
    left: 39px;
    top: 137px;
    width: 988px;
    height: 501px;
    background: rgba(24, 82, 73, 0.72);
}

#comment-1 {
    left: 1044px;
    top: 137px;
    width: 1300px;
    height: 502px;
    background: rgba(24, 106, 128, 0.76);
}

#comment-6 {
    left: 39px;
    top: 688px;
    width: 470px;
    height: 420px;
    background: rgba(24, 118, 128, 0.76);
}

#comment-7 {
    left: 574px;
    top: 688px;
    width: 712px;
    height: 420px;
    background: rgba(24, 118, 128, 0.76);
}

#comment-0 h4 { background: #00594d; }
#comment-1 h4 { background: #008aae; }
#comment-6 h4 { background: #0097ad; }
#comment-7 h4 { background: #0099ae; }

.bubble {
    position: absolute;
    height: 46px;
    padding: 7px;
    border-radius: 5px;
    color: #b4bcbc;
    white-space: nowrap;
}

.bubble span {
    display: block;
    height: 32px;
    padding: 0 11px;
    border: 2px solid rgba(40, 50, 50, 0.75);
    border-radius: 16px;
    line-height: 27px;
}

.bubble::after {
    content: "";
    position: absolute;
    left: 12px;
    top: 100%;
    border: 5px solid transparent;
    border-top: 9px solid;
    border-bottom: none;
}

#bubble-0 {
    left: 39px;
    top: 79px;
    background: linear-gradient(#04514a, #046457);
    box-shadow: inset 0 0 0 2px #026557;
}

#bubble-1 {
    left: 1044px;
    top: 79px;
    background: linear-gradient(#067a99, #088fb4);
    box-shadow: inset 0 0 0 2px #0399c2;
}

#bubble-6 {
    left: 39px;
    top: 630px;
    background: linear-gradient(#068394, #079cb2);
    box-shadow: inset 0 0 0 2px #03a7bf;
}

#bubble-0::after { border-top-color: #046457; }
#bubble-1::after { border-top-color: #088fb4; }
#bubble-6::after { border-top-color: #079cb2; }

/* Nodes */
.node {
    position: absolute;
    border: 2px solid #080d0d;
    border-radius: 7px;
    font-size: 12px;
    line-height: 16px;
    color: #f0f0f0;
    white-space: nowrap;
    background: linear-gradient(rgba(24, 34, 34, 0.93), rgba(9, 20, 19, 0.95) 60%);
    box-shadow: 0 3px 6px rgba(0, 0, 0, 0.6);
}

.node header {
    display: flex;
    align-items: center;
    gap: 5px;
    height: 21px;
    padding: 0 5px 0 8px;
    border-radius: 5px 5px 0 0;
    font-size: 14px;
    font-weight: 700;
    color: #c0c4c4;
    box-shadow: inset 0 2px 1px rgba(255, 255, 255, 0.25);
}

.node header .event-icon {
    width: 15px;
    height: 15px;
    color: #fff;
}

.node header .func-icon {
    width: 12px;
    height: 15px;
    color: #5fb4f0;
}

.event header {
    height: 23px;
    background: linear-gradient(90deg, #901616, #6e1414 55%, #2e3331 95%);
}

.func header {
    gap: 7px;
    padding-left: 9px;
    background: radial-gradient(ellipse at 40% 65%, rgba(20, 30, 40, 0.6), transparent 45%), linear-gradient(100deg, #46789d, #3c6480 50%, #283436 90%);
}

.func.call header {
    gap: 6px;
    align-items: flex-start;
    height: 39px;
    padding-top: 4px;
    padding-left: 7px;
}

.func em {
    display: block;
    font-size: 13px;
    font-weight: 400;
    line-height: 18px;
    color: #7f8d79;
}

.pure header {
    background: radial-gradient(ellipse at 60% 60%, rgba(20, 30, 20, 0.45), transparent 40%), linear-gradient(100deg, #62885f, #4c6a4b 50%, #2a3735 90%);
}

.make-icon {
    width: 15px;
    height: 15px;
    color: #fff;
}

.delegate {
    width: 11px;
    height: 11px;
    margin-left: auto;
    border: 2px solid #ff3434;
    border-radius: 2px;
    background: #1c0505;
}

.row {
    display: flex;
    align-items: center;
    gap: 6px;
    height: 36px;
    padding: 0 11px 0 12px;
}

.row.exec {
    justify-content: space-between;
}

.row.short {
    height: 30px;
}

.row.right {
    justify-content: flex-end;
}

.event .row.exec {
    height: 40px;
}

.event .row.short {
    height: 24px;
}

.row.picker {
    height: 45px;
    margin-top: 5px;
    margin-bottom: 13px;
}

.picker > div {
    flex: 1;
}

.picker label {
    display: block;
    line-height: 17px;
}

.picker .select-wrap {
    width: 196px;
    height: 28px;
    margin-left: 4px;
    color: #b0b0b0;
}

.picker select {
    border-width: 1px;
    border-radius: 4px;
}

.picker .chev {
    width: 11px;
    height: 8px;
    right: 16px;
    margin-top: -4px;
}

.pin-exec {
    width: 12px;
    height: 14px;
    fill: #fff;
    stroke: #fff;
}

.pin-exec.hollow {
    fill: none;
}

.pin {
    width: 14px;
    height: 12px;
}

.pin.bool { color: #8e0000; }
.pin.int { color: #1fbf90; }
.pin.struct { color: #0457cc; }
.pin.enum { color: #066b58; }
.pin.float { color: #38c208; }
.pin.object { color: #00a8f6; }

.row input[type="text"] {
    height: 20px;
    border: 1px solid #b9bfbf;
    border-radius: 2px;
    font-size: 15px;
    line-height: 18px;
    text-align: center;
    color: #b9bfbf;
}

.w-1 { width: 18px; }
.w-2 { width: 26px; }
.w-3 { width: 30px; }
.w-4 { width: 42px; }

.columns {
    display: flex;
    justify-content: space-between;
    padding-top: 4px;
}

.collapse {
    margin: 9px auto 0;
}

.collapse svg {
    width: 12px;
    height: 8px;
    color: #fff;
}

/* Variable set and get nodes */
.setter {
    border-radius: 14px;
    padding: 3px 13px 10px 14px;
    background: radial-gradient(ellipse 40% 32px at 50% 0, rgba(170, 50, 50, 0.6), transparent), linear-gradient(rgba(150, 150, 150, 0.6), rgba(60, 70, 70, 0.4) 14px, transparent 15px), rgba(22, 32, 31, 0.7);
    box-shadow: inset 0 1px 1px rgba(255, 255, 255, 0.6), 0 3px 6px rgba(0, 0, 0, 0.6);
}

.set-head {
    display: flex;
    align-items: center;
    justify-content: space-between;
    height: 44px;
}

.set-head b {
    align-self: flex-start;
    font-size: 14px;
    line-height: 20px;
    color: #c0c4c4;
}

.set-row {
    display: flex;
    align-items: center;
    gap: 6px;
}

.set-row label {
    display: flex;
    align-items: center;
    gap: 6px;
    height: 22px;
}

.set-row label.stacked {
    flex-direction: column;
    align-items: flex-start;
    gap: 0;
    height: 33px;
}

.set-row .stacked input {
    margin-left: 5px;
}

.set-row .out {
    align-self: flex-start;
    margin: 3px 0 0 auto;
}

.set-row input {
    appearance: none;
    width: 17px;
    height: 17px;
    flex: none;
    border: 1px solid #333;
    border-radius: 2px;
    background: #0f0f0f;
}

.set-row input:checked::after {
    content: "";
    display: block;
    width: 10px;
    height: 5px;
    margin: 3px 0 0 3px;
    border: solid #0070e0;
    border-width: 0 0 2px 2px;
    transform: rotate(-48deg);
}

.getter {
    display: flex;
    align-items: center;
    justify-content: flex-end;
    gap: 6px;
    padding-right: 16px;
    border-radius: 13px;
    background: radial-gradient(ellipse 40% 28px at 50% 0, rgba(50, 150, 210, 0.7), transparent), linear-gradient(rgba(150, 160, 165, 0.6), rgba(60, 75, 80, 0.4) 14px, transparent 15px), rgba(20, 40, 45, 0.8);
    box-shadow: inset 0 1px 1px rgba(255, 255, 255, 0.6), 0 3px 6px rgba(0, 0, 0, 0.6);
}

#begin-play { left: 55px; top: 202px; width: 168px; height: 66px; }
#set-intermittent { left: 250px; top: 218px; width: 232px; }
#set-degradation { left: 509px; top: 218px; width: 240px; }
#set-leakage { left: 784px; top: 218px; width: 219px; }
#make-date { left: 1092px; top: 299px; width: 251px; height: 303px; }
#configure-universe { left: 1466px; top: 203px; width: 292px; height: 209px; }
#event-tick { left: 88px; top: 850px; width: 131px; height: 96px; }
#tick-simulation { left: 298px; top: 850px; width: 177px; height: 135px; }
#get-spacecraft { left: 590px; top: 931px; width: 134px; height: 38px; }
#print-information { left: 753px; top: 833px; width: 218px; height: 147px; }
#plot-data { left: 1028px; top: 833px; width: 219px; height: 116px; }

/* Details */
.details {
    width: 381px;
}

.details-body {
    flex: 1;
    background: #242424;
}
```
